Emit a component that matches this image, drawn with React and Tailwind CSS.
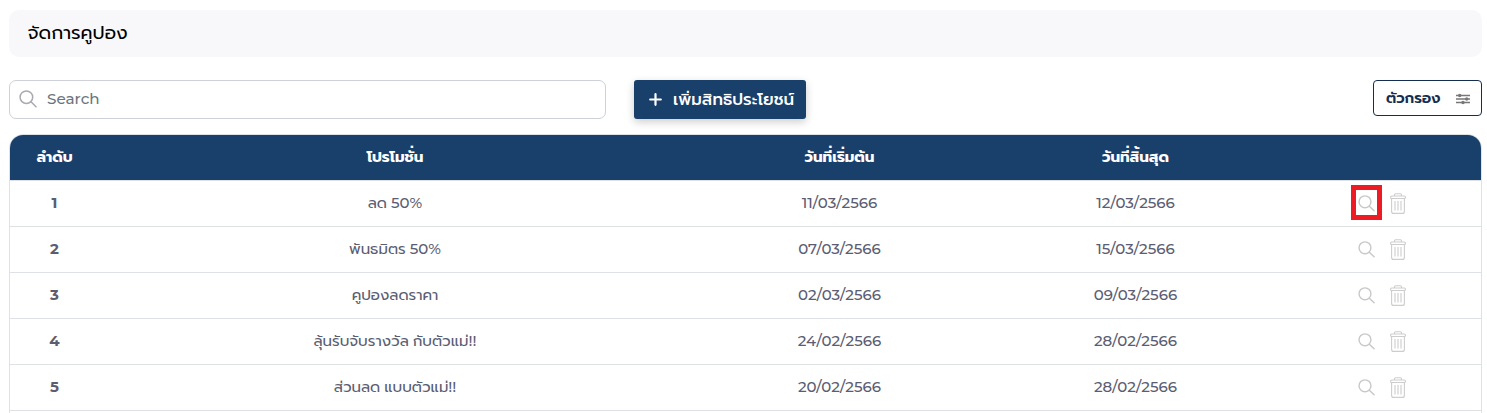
const rows = [
  { no: '1', name: 'ลด', suffix: ' 50%', start: '11/03/2566', end: '12/03/2566', marked: true },
  { no: '2', name: 'พันธมิตร', suffix: ' 50%', start: '07/03/2566', end: '15/03/2566' },
  { no: '3', name: 'คูปองลดราคา', suffix: '', start: '02/03/2566', end: '09/03/2566' },
  { no: '4', name: 'ลุ้นรับจับรางวัล กับตัวแม่', suffix: '!!', start: '24/02/2566', end: '28/02/2566' },
  { no: '5', name: 'ส่วนลด แบบตัวแม่', suffix: '!!', start: '20/02/2566', end: '28/02/2566' },
];

const COLS = 'grid grid-cols-[89px_592px_297px_295px_198px]';

function SearchIcon({ className }) {
  return (
    <svg viewBox="0 0 18 18" className={className} fill="none" stroke="currentColor" strokeWidth="1.5" strokeLinecap="round">
      <circle cx="7.4" cy="7.2" r="6.3" />
      <path d="M12 11.8 17 16.8" />
    </svg>
  );
}

function TrashIcon() {
  return (
    <svg viewBox="0 0 16 21" className="h-[21px] w-4 text-[#cdcdcd]" fill="none" stroke="currentColor" strokeWidth="1.1">
      <path d="M4.5 3V1.8Q4.5.7 5.6.7h4.8q1.1 0 1.1 1.1V3" />
      <rect x=".6" y="3" width="14.8" height="2.5" rx="1" />
      <path d="M1.6 5.5V18.4q0 2 2 2h8.8q2 0 2-2V5.5M5 8v9.5M8 8v9.5M11 8v9.5" />
    </svg>
  );
}

function FilterIcon() {
  return (
    <svg viewBox="0 0 14 12" className="mt-[2px] h-3 w-3.5 text-[#777]" fill="none" stroke="currentColor" strokeWidth="1.3">
      <path d="M0 2.5h14M0 6h14M0 9.5h14" />
      <g fill="currentColor" stroke="none">
        <circle cx="3.7" cy="2.5" r="1.7" />
        <circle cx="10.7" cy="6" r="1.7" />
        <circle cx="7" cy="9.5" r="1.7" />
      </g>
    </svg>
  );
}

export default function App() {
  return (
    <div className="h-[413px] overflow-hidden bg-white pl-[9px] pr-[5px] pt-[10px] font-['Montserrat','Prompt','Inter','Noto_Sans_Thai',sans-serif]">
      <header className="flex h-[47px] items-center rounded-[10px] bg-[#f8f8fb] pl-[18.5px]">
        <h1 className="whitespace-nowrap text-[18.75px] leading-none text-black">จัดการคูปอง</h1>
      </header>

      <div className="mt-[23px] flex h-[39px] items-start">
        <div className="flex h-[39px] w-[597px] items-center rounded-[7px] border border-[#ced0da] pb-[2px] pl-[9px]">
          <SearchIcon className="size-[18px] text-[#a9a9b4]" />
          <span className="ml-[10px] text-[15.2px] font-medium leading-none text-[#6c757d]">Search</span>
        </div>
        <button className="ml-[28px] flex h-[39px] w-[172px] items-center rounded-[3px] bg-[#19406b] pl-[15px] text-white shadow-[0_3px_8px_rgba(0,0,0,0.2)]">
          <svg viewBox="0 0 13 13" className="size-[13px]" stroke="white" strokeWidth="2.2" strokeLinecap="round">
            <path d="M6.5 1.2v10.6M1.2 6.5h10.6" />
          </svg>
          <span className="ml-[11px] whitespace-nowrap text-[16.6px] font-medium leading-none">เพิ่มสิทธิประโยชน์</span>
        </button>
        <button className="ml-auto flex h-[36px] w-[109px] items-center justify-between rounded-[4px] border border-[#152e50] pl-[12px] pr-[11px] text-[#152e50]">
          <span className="whitespace-nowrap text-[14.8px] font-semibold leading-none">ตัวกรอง</span>
          <FilterIcon />
        </button>
      </div>

      <div className="mt-[15px] h-[300px] overflow-hidden rounded-t-[14px] border border-[#dee2e6]">
        <div className={`${COLS} h-[46px] items-center border-b border-[#dee2e6] bg-[#19406b] pb-[2px] text-center text-[15px] font-bold leading-none text-white`}>
          <span>ลำดับ</span>
          <span>โปรโมชั่น</span>
          <span>วันที่เริ่มต้น</span>
          <span>วันที่สิ้นสุด</span>
          <span />
        </div>
        {rows.map(({ no, name, suffix, start, end, marked }) => (
          <div key={no} className={`${COLS} h-[46px] items-center border-b border-[#dee2e6] pb-[2px] text-center text-[15px] leading-none text-[#5b5d72]`}>
            <span className="font-bold">{no}</span>
            <span className="whitespace-pre">{name}<span className="font-medium">{suffix}</span></span>
            <span className="font-medium">{start}</span>
            <span className="font-medium">{end}</span>
            <span className="flex items-center pl-[68px]">
              <span className={marked ? '-my-1 flex h-[35px] w-[31px] items-center justify-center border-[5px] border-[#ed1c24] pt-[2px]' : 'flex w-[31px] justify-center pt-[2px]'}>
                <SearchIcon className="size-[17px] shrink-0 text-[#c8c8c8]" />
              </span>
              <span className="ml-[7.5px] pt-[2px]"><TrashIcon /></span>
            </span>
          </div>
        ))}
      </div>
    </div>
  );
}
